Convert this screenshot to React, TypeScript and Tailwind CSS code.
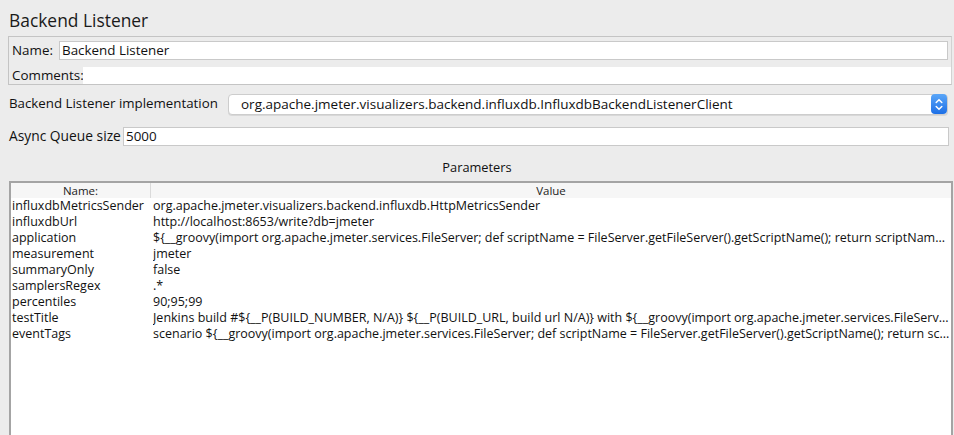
import { ReactNode } from "react";

const rows: [string, string][] = [
  ["influxdbMetricsSender", "org.apache.jmeter.visualizers.backend.influxdb.HttpMetricsSender"],
  ["influxdbUrl", "http://localhost:8653/write?db=jmeter"],
  [
    "application",
    "${__groovy(import org.apache.jmeter.services.FileServer; def scriptName = FileServer.getFileServer().getScriptName(); return scriptNam...",
  ],
  ["measurement", "jmeter"],
  ["summaryOnly", "false"],
  ["samplersRegex", ".*"],
  ["percentiles", "90;95;99"],
  [
    "testTitle",
    "Jenkins build #${__P(BUILD_NUMBER, N/A)} ${__P(BUILD_URL, build url N/A)} with ${__groovy(import org.apache.jmeter.services.FileServ...",
  ],
  [
    "eventTags",
    "scenario ${__groovy(import org.apache.jmeter.services.FileServer; def scriptName = FileServer.getFileServer().getScriptName(); return sc...",
  ],
];

const Field = ({ children, className }: { children?: ReactNode; className?: string }) => (
  <div
    className={
      "h-[19px] bg-white border border-[#c9c9c9] px-[2px] leading-[17px] whitespace-nowrap overflow-hidden " +
      (className || "")
    }
  >
    {children}
  </div>
);

// the blue stepper on the right of a mac combo box
const ComboArrows = () => (
  <div className="w-[16px] h-[20px] rounded-[4px] bg-gradient-to-b from-[#5aa6f8] to-[#1c6fe6] flex items-center justify-center">
    <svg width="8" height="13" viewBox="0 0 8 13" fill="none" stroke="white" strokeWidth="1.5" strokeLinecap="round">
      <path d="M1.2 4.5 L4 1.7 L6.8 4.5" />
      <path d="M1.2 8.5 L4 11.3 L6.8 8.5" />
    </svg>
  </div>
);

export default function App() {
  return (
    <div
      className="w-[954px] h-[435px] bg-[#ececec] text-[#111] text-[13.4px] overflow-hidden flex flex-col"
      style={{ fontFamily: '"Open Sans", "DejaVu Sans", sans-serif' }}
    >
      <div className="h-[36px] pl-[9px] pt-[8px] text-[17.4px] leading-[24px] text-[#1a1a1a]">Backend Listener</div>

      {/* name / comments group */}
      <div className="ml-[8px] mr-[2px] h-[49px] border border-[#c4c4c4] border-r-[#d2d2d2] flex flex-col">
        <div className="flex items-center h-[24px] pt-[3px] pr-[3px]">
          <span className="pl-[3px] w-[50px]">Name:</span>
          <Field className="flex-1">Backend Listener</Field>
        </div>
        <div className="flex items-center h-[23px] pt-[5px]">
          <span className="pl-[3px] w-[74px]">Comments:</span>
          <div className="flex-1 h-[17px] bg-white" />
        </div>
      </div>

      {/* implementation combo */}
      <div className="flex items-center mt-[8px] h-[22px] pl-[9px] pr-[6px]">
        <span className="w-[219px] text-[13.3px]">Backend Listener implementation</span>
        <div className="flex-1 h-[21px] bg-white border border-[#cdcdcd] rounded-[4px] flex items-center justify-between pl-[12px] pr-0 shadow-[0_1px_0_#d8d8d8]">
          <span className="whitespace-nowrap text-[13.5px]">
            org.apache.jmeter.visualizers.backend.influxdb.InfluxdbBackendListenerClient
          </span>
          <ComboArrows />
        </div>
      </div>

      {/* queue size */}
      <div className="flex items-center mt-[12px] h-[19px] pl-[9px] pr-[5px]">
        <span className="w-[114px] text-[13.8px]">Async Queue size</span>
        <Field className="flex-1">5000</Field>
      </div>

      <div className="h-[35px] flex items-center justify-center pt-[9px] text-[12.8px]">Parameters</div>

      {/* parameters table */}
      <div className="flex-1 ml-[9px] mr-[1px] border-t-2 border-l-2 border-r-2 border-[#a4a4a4] bg-white text-[12.5px]">
        <div className="flex h-[15px] bg-[#f6f6f6] text-[11.5px] leading-[15px] text-[#222]">
          <div className="w-[140px] text-center border-r border-[#dadada]">Name:</div>
          <div className="flex-1 text-center">Value</div>
        </div>
        <div>
          {rows.map(([name, value]) => (
            <div key={name} className="flex h-[16px] leading-[16px]">
              <div className="w-[142px] pl-[1px] whitespace-nowrap overflow-hidden">{name}</div>
              <div className="flex-1 whitespace-nowrap overflow-hidden">{value}</div>
            </div>
          ))}
        </div>
      </div>
    </div>
  );
}
